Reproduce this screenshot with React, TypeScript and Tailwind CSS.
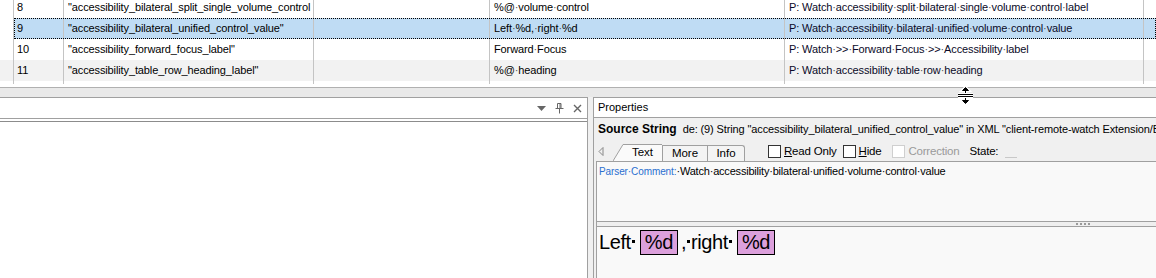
import React from 'react'

type Row = { id: number; key: string; text: string; comment: string }

const DOT = '·'

const rows: Row[] = [
  {
    id: 8,
    key: '"accessibility_bilateral_split_single_volume_control',
    text: '%@·volume·control',
    comment: 'P: Watch·accessibility·split·bilateral·single·volume·control·label',
  },
  {
    id: 9,
    key: '"accessibility_bilateral_unified_control_value"',
    text: 'Left·%d,·right·%d',
    comment: 'P: Watch·accessibility·bilateral·unified·volume·control·value',
  },
  {
    id: 10,
    key: '"accessibility_forward_focus_label"',
    text: 'Forward·Focus',
    comment: 'P: Watch·>>·Forward·Focus·>>·Accessibility·label',
  },
  {
    id: 11,
    key: '"accessibility_table_row_heading_label"',
    text: '%@·heading',
    comment: 'P: Watch·accessibility·table·row·heading',
  },
]

function Ws({ text, dotClass = 'text-[#555]' }: { text: string; dotClass?: string }) {
  const parts = text.split(DOT)
  return (
    <>
      {parts.map((p, i) => (
        <React.Fragment key={i}>
          {i > 0 && <span className={dotClass}>{DOT}</span>}
          {p}
        </React.Fragment>
      ))}
    </>
  )
}

function GridRow({ row, selected, alt }: { row: Row; selected?: boolean; alt?: boolean }) {
  return (
    <div className={`flex h-[21px] leading-[21px] ${alt ? 'bg-[#f2f2f2]' : ''}`}>
      <div className="w-[14px] shrink-0 border-r border-[#c4c4c4]" />
      <div
        className={`flex flex-1 ${
          selected ? 'bg-[#bfdcf4] outline-1 outline-dotted outline-black -outline-offset-1' : ''
        }`}
      >
        <div className="w-[50px] shrink-0 border-r border-[#c4c4c4] pl-[3px]">{row.id}</div>
        <div className="w-[250px] shrink-0 overflow-hidden whitespace-nowrap border-r border-[#c4c4c4] pl-[4px]">
          {row.key}
        </div>
        <div className="w-[176px] shrink-0 border-r border-[#c4c4c4]" />
        <div className="w-[295px] shrink-0 overflow-hidden whitespace-nowrap border-r border-[#c4c4c4] pl-[4px]">
          <Ws text={row.text} />
        </div>
        <div className="w-[359px] shrink-0 overflow-hidden whitespace-nowrap border-r border-[#c4c4c4] pl-[4px] text-[#0a0a28]">
          <Ws text={row.comment} />
        </div>
        <div className="flex-1" />
      </div>
    </div>
  )
}

function Grid() {
  return (
    <div className="h-[87px] shrink-0 overflow-hidden bg-white tracking-[-0.12px] text-black">
      <div className="-mt-[3px]">
        {rows.map((r) => (
          <GridRow key={r.id} row={r} selected={r.id === 9} alt={r.id === 11} />
        ))}
        <div className="flex h-[3px]">
          <div className="w-[14px] shrink-0 border-r border-[#c4c4c4]" />
          <div className="w-[50px] shrink-0 border-r border-[#c4c4c4]" />
          <div className="w-[250px] shrink-0 border-r border-[#c4c4c4]" />
          <div className="w-[176px] shrink-0 border-r border-[#c4c4c4]" />
          <div className="w-[295px] shrink-0 border-r border-[#c4c4c4]" />
          <div className="w-[359px] shrink-0 border-r border-[#c4c4c4]" />
        </div>
      </div>
    </div>
  )
}

function LeftPanel() {
  return (
    <div className="flex w-[588px] shrink-0 flex-col border-r border-t border-[#a0a0a0] bg-white">
      <div className="flex h-[21px] shrink-0 items-center justify-end gap-[9px] border-b border-[#a0a0a0] pr-[5px]">
        <svg width="9" height="5" viewBox="0 0 9 5">
          <path d="M0 0h9L4.5 5z" fill="#666" />
        </svg>
        <svg width="9" height="11" viewBox="0 0 9 11">
          <path d="M2.5 0.5h3.5v5h-3.5z" stroke="#666" fill="none" />
          <path d="M5 0.5v5" stroke="#666" />
          <path d="M0.5 5.5h8M4.5 5.5v5" stroke="#666" />
        </svg>
        <svg width="9" height="9" viewBox="0 0 9 9">
          <path d="M1 1l7 7M8 1l-7 7" stroke="#666" strokeWidth="1.4" />
        </svg>
      </div>
      <div className="h-[2px] shrink-0" />
      <div className="flex-1 border-t border-[#8c8c8c]" />
    </div>
  )
}

function Check({ label, accel, disabled }: { label: string; accel?: boolean; disabled?: boolean }) {
  return (
    <div className="flex items-center">
      <div
        className={`h-[13px] w-[13px] border bg-white ${disabled ? 'border-[#cfcfcf]' : 'border-[#333]'}`}
      />
      <span className={`ml-[3px] ${disabled ? 'text-[#9a9a9a]' : 'text-black'}`}>
        {accel ? (
          <>
            <span className="underline">{label[0]}</span>
            {label.slice(1)}
          </>
        ) : (
          label
        )}
      </span>
    </div>
  )
}

function Tabs() {
  return (
    <div className="flex h-[21px] shrink-0 items-end text-[11.5px]">
      <div className="flex h-full w-[19px] shrink-0 items-center pl-[4px] pt-[2px]">
        <svg width="6" height="9" viewBox="0 0 6 9">
          <path d="M5 0.5v8L1 4.5z" stroke="#888" fill="none" />
        </svg>
      </div>
      <svg width="10" height="17" viewBox="0 0 10 17" className="shrink-0">
        <path d="M0 17L10 0.5V17z" fill="#fafafa" />
        <path d="M0 17L10 0.5" stroke="#a0a0a0" fill="none" />
      </svg>
      <div className="flex h-[17px] w-[39px] shrink-0 items-center justify-center border-t border-[#a0a0a0] bg-[#fafafa] leading-none">
        Text
      </div>
      <div className="flex h-[16px] w-[46px] shrink-0 items-center justify-center border-l border-r border-t border-[#a0a0a0] bg-[#f4f4f4] leading-none">
        More
      </div>
      <div className="flex h-[16px] w-[37px] shrink-0 items-center justify-center rounded-tr-[3px] border-r border-t border-[#a0a0a0] bg-[#f4f4f4] leading-none">
        Info
      </div>
      <div className="flex h-full items-center pl-[23px] pt-[2px] tracking-[-0.2px]">
        <Check label="Read Only" accel />
        <div className="ml-[6px]">
          <Check label="Hide" accel />
        </div>
        <div className="ml-[11px]">
          <Check label="Correction" disabled />
        </div>
        <span className="ml-[10px] text-black">State:</span>
        <div className="ml-[7px] mt-[12px] h-[1px] w-[12px] bg-[#c8c8c8]" />
      </div>
    </div>
  )
}

function Dot() {
  return <span className="mx-[1px] mb-[3px] inline-block h-[3px] w-[3px] bg-black" />
}

function Properties() {
  return (
    <div className="flex min-w-0 flex-1 flex-col border-l border-[#a0a0a0]">
      <div className="flex h-[21px] shrink-0 items-center border-b border-t border-[#a0a0a0] bg-white pl-[4px]">
        Properties
      </div>
      <div className="flex h-[22px] shrink-0 items-center overflow-hidden whitespace-nowrap pl-[4px]">
        <span className="text-[12px] font-bold">Source String</span>
        <span className="ml-[6px] tracking-[-0.12px]">
          de: (9) String "accessibility_bilateral_unified_control_value" in XML "client-remote-watch
          Extension/B
        </span>
      </div>
      <Tabs />
      <div className="ml-[2px] h-[60px] shrink-0 border-l border-t border-[#a0a0a0] bg-[#f9f9f9] px-[2px] pt-[2px] leading-[14px]">
        <span className="text-[10px] tracking-[-0.1px] text-[#2a6fd0]">
          <Ws text="Parser·Comment:" dotClass="text-[#2a6fd0]" />
        </span>
        <span className="tracking-[-0.2px] text-black">
          <Ws text="·Watch·accessibility·bilateral·unified·volume·control·value" dotClass="text-black" />
        </span>
      </div>
      <div className="ml-[2px] flex h-[6px] shrink-0 items-center justify-end border-l border-t border-b border-[#a0a0a0] bg-[#efefef] pr-[66px]">
        <div className="flex gap-[2px]">
          <div className="h-[2px] w-[2px] bg-[#9a9a9a]" />
          <div className="h-[2px] w-[2px] bg-[#9a9a9a]" />
          <div className="h-[2px] w-[2px] bg-[#9a9a9a]" />
          <div className="h-[2px] w-[2px] bg-[#9a9a9a]" />
        </div>
      </div>
      <div className="ml-[2px] flex-1 border-l border-[#a0a0a0] bg-[#f9f9f9] pl-[2px] pt-[3px]">
        <div className="flex items-center text-[20px] leading-[23px] tracking-[-0.4px] text-black">
          <span className="flex items-center">
            Left
            <Dot />
          </span>
          <span className="ml-[4px] border border-black bg-[#dca0dc] px-[4px]">%d</span>
          <span className="ml-[3px] flex items-center">
            ,<Dot />
            right
            <Dot />
          </span>
          <span className="ml-[4px] border border-black bg-[#dca0dc] px-[4px]">%d</span>
        </div>
      </div>
    </div>
  )
}

function ResizeCursor() {
  return (
    <svg width="17" height="17" viewBox="0 0 17 17" className="absolute left-[957px] top-[87px]">
      <g stroke="#fff" strokeWidth="3" fill="#fff">
        <path d="M1 7.5h15M1 9.5h15M8.5 2v4M8.5 11v4" />
        <path d="M8.5 0.5L5.5 3.5h6z M8.5 16.5L5.5 13.5h6z" />
      </g>
      <g stroke="#000" strokeWidth="1" fill="#000">
        <path d="M1 7.5h15M1 9.5h15M8.5 2v4M8.5 11v4" />
        <path d="M8.5 0.5L5.5 3.5h6z M8.5 16.5L5.5 13.5h6z" />
      </g>
    </svg>
  )
}

export default function App(): JSX.Element {
  return (
    <div className="relative flex h-[278px] w-[1156px] flex-col overflow-hidden bg-[#f0f0f0] font-['Liberation_Sans',Arial,sans-serif] text-[11px] text-black">
      <Grid />
      <div className="h-[1px] shrink-0 bg-[#b0b0b0]" />
      <div className="h-[9px] shrink-0 bg-[#e9e9e9]" />
      <div className="flex min-h-0 flex-1">
        <LeftPanel />
        <div className="w-[5px] shrink-0" />
        <Properties />
      </div>
      <ResizeCursor />
    </div>
  )
}
